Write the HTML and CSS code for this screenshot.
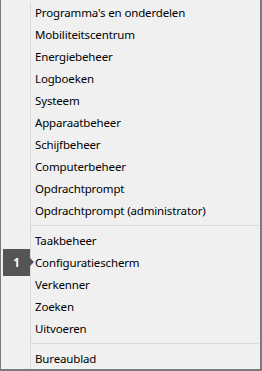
FILE: index.html
```html
<!DOCTYPE html>
<html lang="nl">
<head>
    <meta charset="UTF-8">
    <title>Snelkoppelingen</title>
    <link rel="stylesheet" href="styles.css">
</head>
<body>
    <div class="menu">
        <div class="list">
            <div class="item">Programma's en onderdelen</div>
            <div class="item">Mobiliteitscentrum</div>
            <div class="item">Energiebeheer</div>
            <div class="item">Logboeken</div>
            <div class="item">Systeem</div>
            <div class="item">Apparaatbeheer</div>
            <div class="item">Schijfbeheer</div>
            <div class="item">Computerbeheer</div>
            <div class="item">Opdrachtprompt</div>
            <div class="item">Opdrachtprompt (administrator)</div>
            <div class="sep"></div>
            <div class="item">Taakbeheer</div>
            <div class="item current">
                <span class="badge">1</span>
                Configuratiescherm
            </div>
            <div class="item">Verkenner</div>
            <div class="item">Zoeken</div>
            <div class="item">Uitvoeren</div>
            <div class="sep"></div>
            <div class="item">Bureaublad</div>
        </div>
    </div>
</body>
</html>
```

FILE: styles.css
```css
* {
    margin: 0;
    padding: 0;
    box-sizing: border-box;
}
body {
    background-color: #f0f0f0;
}
.menu {
    width: 262px;
    height: 371px;
    background-color: #f0f0f0;
    border-left: 1px solid #7a7a7a;
    border-right: 2px solid #7a7a7a;
    border-bottom: 2px solid #7a7a7a;
    padding-left: 29px;
    padding-top: 2px;
    font-family: "Noto Sans", "Open Sans", sans-serif;
    font-size: 11.5px;
    letter-spacing: -0.15px;
    color: #000;
    overflow: hidden;
}
.list {
    height: 100%;
    border-left: 1px solid #d9d9d9;
}
.item {
    height: 22px;
    line-height: 22px;
    padding-left: 4px;
    white-space: nowrap;
}
.sep {
    height: 1px;
    background-color: #d9d9d9;
    margin: 3px 1px 4px 0;
}
.current {
    position: relative;
}
/* jump list number */
.badge {
    position: absolute;
    left: -28px;
    top: -3px;
    width: 27px;
    height: 27px;
    background-color: #555;
    color: #fff;
    font-weight: bold;
    text-align: center;
    line-height: 27px;
    letter-spacing: 0;
}
.badge::after {
    content: "";
    position: absolute;
    right: -4px;
    top: 9px;
    border-top: 4px solid transparent;
    border-bottom: 4px solid transparent;
    border-left: 4px solid #555;
}
```
